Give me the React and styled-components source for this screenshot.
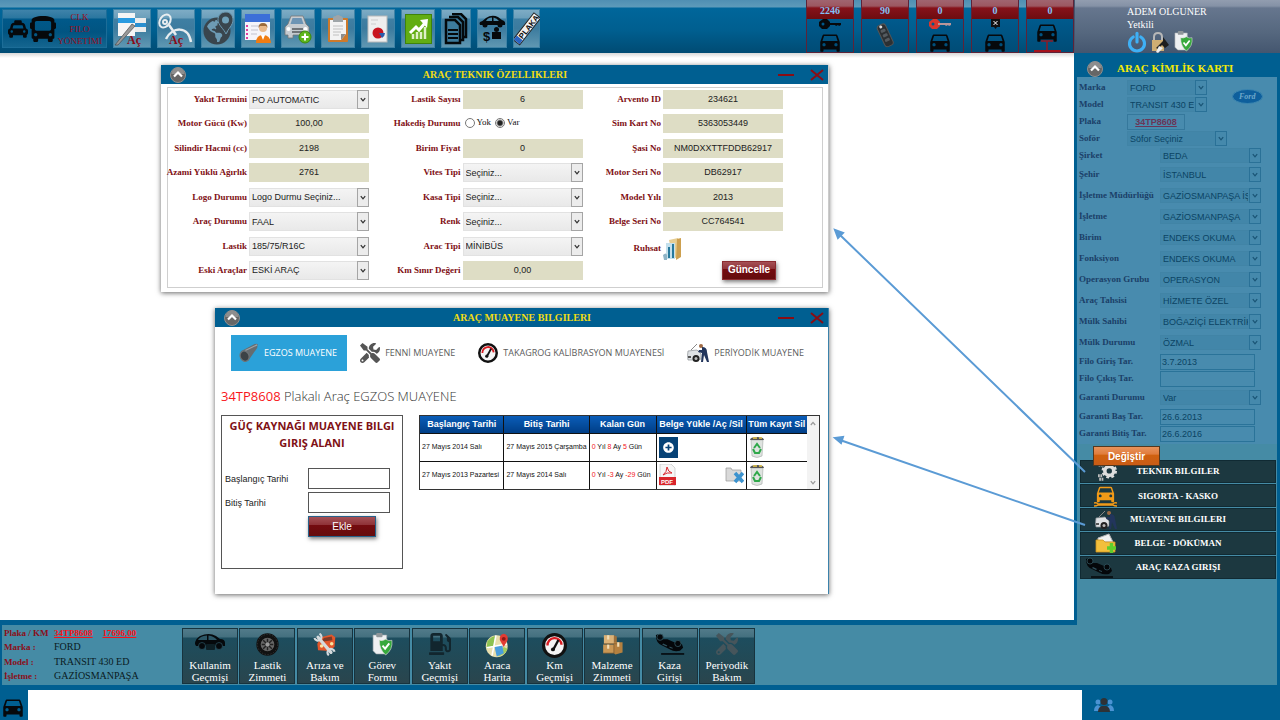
import React from "react";
import styled, { createGlobalStyle } from "styled-components";
import {
  FaTaxi, FaBus, FaTools, FaGasPump, FaGlobeAmericas, FaPlusCircle,
} from "react-icons/fa";
import { MdDirectionsCar } from "react-icons/md";

const serif = '"Liberation Serif", "Times New Roman", serif';
const sans = '"Liberation Sans", Arial, sans-serif';
const open = '"Open Sans", "Noto Sans", sans-serif';
const blue = "#005f91";
const teal = "#458ba5";

const Global = createGlobalStyle`
  *, *::before, *::after { box-sizing: border-box; }
  body { margin: 0; background: #fff; font-family: ${serif}; }
  button, input, select { margin: 0; border-radius: 0; }
  svg { display: block; flex: none; }
`;

/* ---------- page frame ---------- */
const Page = styled.div`
  display: flex;
  flex-direction: column;
  min-height: 100vh;
`;
const Header = styled.header`
  display: flex;
  height: 53px;
`;
const Toolbar = styled.div`
  flex: 1;
  display: flex;
  align-items: flex-start;
  justify-content: space-between;
  padding-left: 2px;
  background: linear-gradient(#4f8fb3 0, #5d9aba 7px, #00669b 8px, #005f90 30px, #004b73 100%);
`;
const ToolGroup = styled.div`
  display: flex;
  gap: 6px;
  padding-top: 9px;
`;
const ToolButton = styled.button`
  width: ${(p) => p.$w}px;
  height: 39px;
  padding: 0;
  display: flex;
  align-items: center;
  justify-content: center;
  gap: 2px;
  border: 1px solid ${(p) => (p.$dark ? "#1c6d98" : "#3f83a6")};
  background: ${(p) =>
    p.$dark
      ? "linear-gradient(#3f83aa 0, #2a769f 8px, #00598a 9px, #015481 60%, #14658f)"
      : "linear-gradient(#7eacc5 0, #6b9fbb 8px, #3f7fa3 9px, #3c7b9e 50%, #5f97b2)"};
`;
const Brand = styled.span`
  width: 44px;
  font: 9px/12px ${serif};
  text-align: center;
  color: #9c0d20;
`;
const Counters = styled.div`
  display: flex;
  gap: 7px;
`;
const Counter = styled.button`
  width: 48px;
  height: 53px;
  padding: 0;
  display: flex;
  flex-direction: column;
  border: 1px solid #5d2338;
  border-top: 0;
  background: linear-gradient(#00629a, #004c76);
`;
const CounterValue = styled.span`
  width: 100%;
  height: 19px;
  font: bold 10px/21px ${serif};
  color: #84c0f5;
  background: linear-gradient(#a06470 0, #9c5761 6px, #86121a 8px, #6d0c10 100%);
`;
const CounterArt = styled.span`
  flex: 1;
  width: 100%;
  display: flex;
  flex-direction: column;
  align-items: center;
  justify-content: ${(p) => (p.$center ? "center" : "flex-end")};
`;
const UserBox = styled.div`
  width: 206px;
  padding: 5px 0 0 52px;
  border-left: 1px solid #46566e;
  color: #fff;
  font: 10px/13px ${serif};
  background: linear-gradient(#929daf 0, #8592a6 6px, #66768e 8px, #56687f 60%, #44566f);
`;
const UserIcons = styled.div`
  display: flex;
  gap: 4px;
`;
const IconButton = styled.button`
  padding: 0;
  border: 0;
  background: none;
  display: flex;
`;

const Body = styled.div`
  flex: 1;
  display: flex;
  position: relative;
`;
const Left = styled.div`
  flex: 1;
  min-width: 0;
  display: flex;
  flex-direction: column;
`;
const Desktop = styled.main`
  flex: 1;
  display: flex;
  flex-direction: column;
  gap: 16px;
  padding: 12px 0 26px 161px;
  border-right: 3px solid ${blue};
  background: linear-gradient(#d8d8d8 0, #fff 5px);
`;
const Arrows = styled.svg`
  position: absolute;
  top: 0;
  left: 830px;
  pointer-events: none;
`;

/* ---------- windows ---------- */
const Window = styled.section`
  width: ${(p) => p.$w}px;
  margin-left: ${(p) => p.$indent || 0}px;
  background: #fff;
  border-right: 1px solid ${(p) => (p.$indent ? "#3b82ab" : "#ccc")};
  box-shadow: 0 1px 5px rgba(0, 0, 0, 0.6);
`;
const TitleBar = styled.div`
  display: grid;
  grid-template-columns: 42px 1fr 46px;
  align-items: center;
  height: 19px;
  padding: 0 4px 0 9px;
  background: ${blue};
`;
const Title = styled.h2`
  margin: 0;
  text-align: center;
  font: bold ${(p) => p.$size || 10}px/19px ${serif};
  color: ${(p) => (p.$size ? "#f2ea08" : "#f0dc14")};
`;
const WinControls = styled.div`
  display: flex;
  align-items: center;
  justify-content: space-between;
`;
const TechForm = styled.form`
  display: flex;
  justify-content: space-between;
  height: 201px;
  margin: 3px 5px 4px 6px;
  padding: 2px 39px 7px 0;
  border: 1px solid #cfcfcf;
`;
const FormColumn = styled.div`
  display: flex;
  flex-direction: column;
  justify-content: space-between;
`;
const FormRow = styled.div`
  display: grid;
  grid-template-columns: ${(p) => p.$label || 79}px 120px;
  align-items: center;
  gap: 2px;
  height: 19px;
`;
const FieldLabel = styled.label`
  display: flex;
  justify-content: flex-end;
  white-space: nowrap;
  font: bold 9px/19px ${serif};
  color: #800f14;
`;
const Value = styled.input`
  width: 100%;
  height: 19px;
  padding: 0;
  border: 0;
  text-align: center;
  font: 9px/19px ${sans};
  color: #222;
  background: #deddc5;
`;
const SelectWrap = styled.span`
  position: relative;
  display: block;
  width: ${(p) => (p.$w ? p.$w + "px" : "100%")};
`;
const SelectBox = styled.select`
  appearance: none;
  display: block;
  width: 100%;
  height: ${(p) => (p.$aside ? 15 : 19)}px;
  padding: 0 12px 0 2px;
  border: 1px solid ${(p) => (p.$aside ? "#4184a6" : "#e2e2e2")};
  font: 9px/12px ${sans};
  color: ${(p) => (p.$aside ? "#0b4464" : "#222")};
  background: ${(p) => (p.$aside ? "#4286a9" : "linear-gradient(#f4f4f4, #e9e9e9)")};
`;
const SelectArrow = styled.span`
  position: absolute;
  top: 0;
  right: 0;
  bottom: 0;
  width: 12px;
  display: flex;
  align-items: center;
  justify-content: center;
  pointer-events: none;
  color: ${(p) => (p.$aside ? "#1a5576" : "#333")};
  border: 1px solid ${(p) => (p.$aside ? "#2a7197" : "#a5a5a5")};
  background: ${(p) => (p.$aside ? "#4589ac" : "#ececec")};
`;
const RadioGroup = styled.div`
  display: flex;
  align-items: center;
  height: 19px;
  padding: 0 0 2px 2px;
`;
const RadioLabel = styled.label`
  display: flex;
  align-items: center;
  gap: 2px;
  margin-right: 4px;
  font: 9px/15px ${serif};
  color: #111;
`;
const Radio = styled.input`
  appearance: none;
  width: 10px;
  height: 10px;
  margin: 0;
  border: 1px solid #777;
  border-radius: 50%;
  background: #fff;
  &:checked { background: radial-gradient(#222 0 2px, #fff 4px); }
`;
const SubmitRow = styled.div`
  display: flex;
  justify-content: flex-end;
  padding-right: 7px;
`;
const RedButton = styled.button`
  width: ${(p) => p.$w}px;
  height: ${(p) => p.$h}px;
  padding: 0;
  border: 1px solid ${(p) => (p.$edge ? "#27628a" : "#8b2b30")};
  color: #fff;
  font: ${(p) => (p.$bold ? "bold" : "normal")} 10px/16px ${sans};
  background: linear-gradient(#a55055 0, #8f3338 40%, #740b0f 42%, #650c0d 100%);
  box-shadow: 1px 2px 4px rgba(0, 0, 0, 0.5);
`;

/* ---------- inspection window ---------- */
const Tabs = styled.nav`
  display: flex;
  gap: 5px;
  padding: 8px 0 0 16px;
`;
const Tab = styled.button`
  display: flex;
  align-items: center;
  gap: 5px;
  height: 36px;
  padding: 0 10px 0 8px;
  border: 0;
  white-space: nowrap;
  font: 9px/16px ${open};
  color: ${(p) => (p.$active ? "#fff" : "#5c5c5c")};
  background: ${(p) => (p.$active ? "#2ba1d9" : "transparent")};
`;
const Headline = styled.h3`
  margin: 14px 0 8px 6px;
  font: 300 13px/22px ${open};
  color: #333;
`;
const Plate = styled.span`
  font-weight: 400;
  color: #f8161b;
`;
const InspectionBody = styled.div`
  display: flex;
  align-items: flex-start;
  gap: 16px;
  padding: 0 8px 25px 6px;
`;
const EntryForm = styled.form`
  width: 182px;
  height: 154px;
  padding: 1px 3px;
  border: 1px solid #555;
`;
const EntryTitle = styled.h4`
  margin: 0 0 17px;
  text-align: center;
  font: bold 11px/17px ${open};
  color: #7f1116;
`;
const EntryRow = styled.div`
  display: grid;
  grid-template-columns: 83px 82px;
  align-items: center;
  margin-bottom: 3px;
`;
const EntryLabel = styled.label`
  font: 9px/16px ${sans};
  color: #222;
`;
const EntryInput = styled.input`
  height: 21px;
  border: 1px solid #555;
  background: #fff;
`;
const TableBox = styled.div`
  flex: 1;
  display: flex;
  border: 1px solid #333;
`;
const Records = styled.table`
  flex: 1;
  border-collapse: collapse;
  table-layout: fixed;
  font: 7px/12px ${sans};
  color: #111;
`;
const Th = styled.th`
  width: ${(p) => p.$w}px;
  height: 17px;
  padding: 0;
  white-space: nowrap;
  border-right: 1px solid #111;
  border-bottom: 1px solid #111;
  font: bold 9px/16px ${sans};
  color: #fff;
  background: linear-gradient(#0a5db8, #003e86);
  &:last-child { border-right: 0; }
`;
const Td = styled.td`
  height: 28px;
  padding: 0 2px;
  white-space: nowrap;
  border-right: 1px solid #111;
  border-bottom: 1px solid #111;
  &:last-child { border-right: 0; }
  tr:last-child & { border-bottom: 0; }
`;
const Red = styled.span`
  color: #f1161b;
`;
const CellIcons = styled.div`
  display: flex;
  justify-content: space-between;
`;
const ScrollStrip = styled.div`
  width: 12px;
  display: flex;
  flex-direction: column;
  align-items: center;
  justify-content: space-between;
  padding: 5px 0 4px;
  color: #999;
  background: #f3f3f3;
`;

/* ---------- identity card ---------- */
const Aside = styled.aside`
  width: 203px;
  border: solid ${blue};
  border-width: 0 3px 5px 0;
  background: ${teal};
`;
const AsideHead = styled.div`
  display: flex;
  align-items: center;
  gap: 14px;
  height: 24px;
  padding: 7px 0 0 10px;
  background: ${blue};
`;
const CardForm = styled.form`
  height: 367px;
  padding: 2px 0 0 2px;
  background: #488bae;
`;
const CardTop = styled.div`
  display: flex;
  align-items: center;
  gap: 25px;
`;
const CardRow = styled.div`
  display: grid;
  grid-template-columns: ${(p) => (p.$near ? 48 : 81)}px auto;
  justify-content: start;
  align-items: center;
  height: ${(p) => (p.$tall ? 21 : 17)}px;
`;
const CardLabel = styled.label`
  white-space: nowrap;
  font: bold 9px/15px ${serif};
  color: #1b3f68;
`;
const CardInput = styled.input`
  width: 95px;
  height: 16px;
  padding: 0 1px;
  border: 1px solid #2a7399;
  font: 9px/12px ${sans};
  color: #0b4464;
  background: #488bae;
`;
const PlateLink = styled.a`
  width: 58px;
  border: 1px solid #35789c;
  text-align: center;
  font: bold 9px/14px ${sans};
  color: #6b3557;
`;
const ChangeButton = styled.button`
  position: relative;
  display: block;
  width: 67px;
  height: 20px;
  margin: 2px 0 -6px 16px;
  padding: 0;
  border: 1px solid #54381f;
  color: #fff;
  font: bold 10px/20px ${sans};
  background: linear-gradient(#e8935c 0, #e07c3c 40%, #d0610f 45%, #c95c17 100%);
`;
const Menu = styled.nav`
  display: flex;
  flex-direction: column;
  gap: 1px;
  padding: 0 1px 0 3px;
`;
const MenuLink = styled.a`
  display: grid;
  grid-template-columns: 36px 1fr 36px;
  align-items: center;
  justify-items: center;
  height: 23px;
  border: 1px solid #102a33;
  font: bold 9px/21px ${serif};
  color: #fff;
  text-decoration: none;
  white-space: nowrap;
  background: #1c3840;
`;
const MenuIcon = styled.span`
  justify-self: end;
  margin-right: ${(p) => (p.$wide ? 4 : 0)}px;
`;

/* ---------- bottom bar ---------- */
const BottomBar = styled.div`
  display: flex;
  height: 70px;
  padding-left: 2px;
  border: solid ${blue};
  border-width: 5px 0;
  background: ${blue};
`;
const BottomInner = styled.div`
  flex: 1;
  display: flex;
  padding: 0 0 2px 2px;
  background: ${teal};
`;
const Info = styled.dl`
  width: 178px;
  margin: 0;
  padding-top: 1px;
  display: grid;
  grid-template-columns: 50px 1fr;
  grid-template-rows: repeat(4, 1fr);
  align-items: center;
  font: 10px/14px ${serif};
`;
const InfoLabel = styled.dt`
  font: bold 9px/14px ${serif};
  white-space: nowrap;
  color: #8a0f19;
`;
const InfoValue = styled.dd`
  margin: 0;
  display: flex;
  gap: 10px;
  color: #0a1a22;
`;
const RedLink = styled.a`
  font: bold 9px/14px ${serif};
  color: #fa1016;
`;
const Actions = styled.div`
  width: 573px;
  padding-top: 3px;
  display: flex;
  justify-content: space-between;
`;
const ActionButton = styled.button`
  width: 56px;
  height: 56px;
  padding: 4px 0 0;
  display: flex;
  flex-direction: column;
  align-items: center;
  justify-content: space-between;
  border: 1px solid #17333e;
  color: #fff;
  font: 11px/12px ${serif};
  background: linear-gradient(#527b8a 0, #44707f 8px, #1d4d5e 9px, #234955 60%, #2a454d 100%);
`;
const Footer = styled.footer`
  display: flex;
  height: 30px;
  background: ${blue};
`;
const FootCell = styled.div`
  width: ${(p) => p.$w}px;
  display: flex;
  align-items: center;
  padding: ${(p) => p.$pad};
`;
const FootInput = styled.div`
  flex: 1;
  background: #fff;
`;

/* ---------- drawings ---------- */
const Svg = ({ w, h = w, vb = "0 0 32 32", children }) => (
  <svg width={w} height={h} viewBox={vb} aria-hidden="true">{children}</svg>
);
const Chevron = ({ up }) => (
  <svg width="6" height="5" viewBox="0 0 6 5" aria-hidden="true">
    <path d={up ? "M.8 4 3 1.4 5.200 4" : "M.8 1.200 3 3.800 5.200 1.200"} fill="none" stroke="currentColor" strokeWidth="1.300" />
  </svg>
);
const Collapse = () => (
  <Svg w={16}>
    <circle cx="16" cy="16" r="15" fill="#666" stroke="#8f8f8f" strokeWidth="2" />
    <path d="M3 14a13 13 0 0 1 26 0z" fill="#8e8e8e" />
    <path d="M8 19 16 11l8 8" fill="none" stroke="#fff" strokeWidth="4.500" />
  </Svg>
);
const Sheets = () => (
  <Svg w={36} vb="0 0 36 36">
    <rect x="4" y="2" width="17" height="23" fill="#f5f5f5" />
    <rect x="4" y="7" width="17" height="5" fill="#2a9be0" />
    <rect x="21" y="7" width="11" height="14" fill="#ececec" />
    <rect x="21" y="12" width="11" height="4" fill="#2a8fd0" />
    <path d="M1 34 18 13l3 2L4 34z" fill="#999" stroke="#4c4c4c" strokeWidth=".7" />
    <text x="13" y="33" fontFamily="Liberation Serif" fontWeight="bold" fontSize="12" fill="#8c0a14">Aç</text>
  </Svg>
);
const Satellite = () => (
  <Svg w={36} vb="0 0 36 36">
    <g fill="none" stroke="#e7edf0" strokeWidth="2">
      <ellipse cx="7" cy="10" rx="5" ry="7" transform="rotate(35 7 10)" />
      <circle cx="7" cy="11" r="2" />
      <path d="M11 14 18 24M8 28C14 16 30 14 33 31" strokeWidth="2.500" />
    </g>
    <text x="11" y="33" fontFamily="Liberation Serif" fontWeight="bold" fontSize="12" fill="#8c0a14">Aç</text>
  </Svg>
);
const GlobePin = () => (
  <Svg w={32} h={36} vb="0 0 32 36">
    <circle cx="15" cy="20" r="13" fill="#6d9bb4" />
    <g transform="translate(1 6)" color="#39454d"><FaGlobeAmericas size="28" /></g>
    <path d="M24 1c-5 0-8 3.500-8 8 0 5 6 9 8 14 2-5 7-9 7-14 0-4.500-3-8-7-8z" fill="#39454d" stroke="#6c9ab2" />
    <circle cx="23.500" cy="9" r="3.500" fill="#6fa0b9" />
  </Svg>
);
const Contact = () => (
  <Svg w={27} h={30} vb="0 0 27 30">
    <rect width="25" height="26" fill="#f4f4fa" />
    <rect width="25" height="8" fill="#3c6fd8" />
    <path d="M2 11v14" stroke="#e03fa0" strokeWidth="2" strokeDasharray="2 2" />
    <path d="M6 12h9M6 16h7M6 20h6" stroke="#c2c2ce" />
    <circle cx="18" cy="14" r="4" fill="#e8b88a" />
    <path d="M13.500 14q0-5 4.500-5t4.500 5l-1.500-2h-6z" fill="#9b6a3b" />
    <path d="M11 29q0-8 7-8t8 8z" fill="#f07c12" />
    <path d="m16 21 2 5 2-5z" fill="#fff" />
  </Svg>
);
const CarPlus = () => (
  <Svg w={28} h={30} vb="0 0 28 30">
    <path d="M4 10 7 2h12l3 8 3 3v8h-4v3h-4v-3H9v3H4v-3H1v-8z" fill="#c6cbd0" stroke="#777" strokeWidth=".8" />
    <path d="m6.500 10 2-6h9l2 6z" fill="#6d94b4" />
    <path d="M8 14h11v2H8zM8 17h11v2H8z" fill="#707478" />
    <circle cx="4.500" cy="15" r="2" fill="#fff" /><circle cx="21.500" cy="15" r="2" fill="#fff" />
    <circle cx="21" cy="23" r="6" fill="#5db51b" stroke="#3c8a0c" />
    <path d="M21 19.500v7M17.500 23h7" stroke="#fff" strokeWidth="2" />
  </Svg>
);
const Clipboard = () => (
  <Svg w={22} h={28} vb="0 0 22 28">
    <rect x="1" y="3" width="20" height="24" rx="1" fill="#cd7a2c" />
    <path d="M3 5h16v14l-5 6H3z" fill="#f3f3f3" />
    <path d="M14 25v-6h5z" fill="#8d8d8d" />
    <path d="M6 3q0-2 3-2 0-1 2-1t2 1q3 0 3 3v3H6z" fill="#9fa5a8" />
    <path d="M6 11h10M6 14h10M6 17h8M6 20h6" stroke="#c0c0c0" />
  </Svg>
);
const Report = () => (
  <Svg w={22} h={28} vb="0 0 22 28">
    <rect x="1" y="1" width="19" height="26" fill="#eee" stroke="#b9b9b9" />
    <path d="M4 5h7M4 9h5" stroke="#ccc" />
    <circle cx="11" cy="18" r="5.500" fill="#c8141f" />
    <path d="M12 18h6a6 6 0 0 1-3 5z" fill="#2b5cab" />
  </Svg>
);
const Growth = () => (
  <Svg w={27} h={30} vb="0 0 27 30">
    <rect x=".5" y=".5" width="26" height="29" fill="#62ad12" stroke="#3f830a" />
    <path d="M8 20v5M12 18v7M16 18v7M20 13v12" stroke="#dff0c8" strokeWidth="2.500" />
    <path d="m5 19 6-6 3 3 6-7" fill="none" stroke="#fff" strokeWidth="3" />
    <path d="m15 6 8-1-1 9z" fill="#fff" />
  </Svg>
);
const Files = () => (
  <Svg w={24} h={32} vb="0 0 24 32">
    <path d="M8 1h9l5 5v18h-4" fill="#3d7b9c" stroke="#05090b" strokeWidth="2.500" />
    <path d="M5 4h9l5 5v18h-3" fill="#3d7b9c" stroke="#05090b" strokeWidth="2.500" />
    <path d="M2 7h9l5 5v18H2z" fill="#3d7b9c" stroke="#05090b" strokeWidth="2.500" />
    <path d="M4 17h10M4 21h10M4 25h10" stroke="#05090b" strokeWidth="2" />
  </Svg>
);
const CarMoney = () => (
  <Svg w={27} h={30} vb="0 0 27 30">
    <path d="M1 8q3-1 6-4 6-4 12-1l4 3q4 1 3 5H1q-1-2 0-3z" fill="#06090c" />
    <path d="M9 4.500Q8 5 7 7h6V3.500q-2 0-4 1zM14.500 3.500V7H20q-2-3-5.500-3.500z" fill="#4986a6" />
    <circle cx="6" cy="11" r="2.500" fill="#06090c" /><circle cx="21" cy="11" r="2.500" fill="#06090c" />
    <text x="4" y="27" fontFamily="Liberation Sans" fontWeight="bold" fontSize="13" fill="#06090c">$</text>
    <path d="M13 18h9v7h-9z" fill="#06090c" /><circle cx="17.500" cy="15.500" r="2.500" fill="#06090c" />
  </Svg>
);
const PlateTag = () => (
  <Svg w={26} h={34} vb="0 0 26 34">
    <g transform="rotate(-52 13 17)">
      <rect x="-4" y="12.500" width="34" height="8.500" fill="#f2f2f2" stroke="#222" />
      <rect x="-3.500" y="13" width="5" height="7.500" fill="#2c64c0" />
      <text x="2" y="20" fontFamily="Liberation Sans" fontWeight="bold" fontSize="8" fill="#111">PLAKA</text>
    </g>
  </Svg>
);
const Remote = () => (
  <Svg w={20} h={26} vb="0 0 20 26">
    <g transform="rotate(-25 10 13)">
      <rect x="6" y="1" width="9" height="23" rx="3" fill="#2c3033" stroke="#555" />
      <rect x="8" y="6" width="5" height="3" rx="1" fill="#555b60" />
      <rect x="8" y="11" width="5" height="3" rx="1" fill="#555b60" />
      <rect x="8" y="16" width="5" height="3" rx="1" fill="#555b60" />
      <circle cx="10" cy="3" r="1.500" fill="#ddd" />
    </g>
  </Svg>
);
const KeyShape = ({ color, blade }) => (
  <Svg w={24} h={10} vb="0 0 24 10">
    <path d="M5 0h4l3 3v4L9 10H4L1 7V3z" fill={color} />
    <path d="M10 4h13v2l-2 1-1-1-2 1-1-1h-7z" fill={blade || color} />
    <circle cx="5" cy="5" r="1.500" fill="#00588a" />
  </Svg>
);
const Badge = () => (
  <Svg w={9} h={10} vb="0 0 9 10">
    <path d="M0 0h9v8H6L4.500 10 3 8H0z" fill="#111" />
    <path d="m2.500 2 4 4M6.500 2l-4 4" stroke="#fff" />
  </Svg>
);
const LiftedCar = () => (
  <Svg w={46} h={33} vb="0 0 46 33">
    <g transform="translate(7 0)" color="#06090c"><MdDirectionsCar size="26" /></g>
    <path d="M14 22h12M20 22v10" stroke="#8f1a24" strokeWidth="1.500" />
    <path d="M7 32h27" stroke="#a5121c" strokeWidth="2" />
  </Svg>
);
const Power = () => (
  <Svg w={20} h={22}>
    <path d="M10 8a12 12 0 1 0 12 0M16 2v14" fill="none" stroke="#3fb0f5" strokeWidth="5" strokeLinecap="round" />
  </Svg>
);
const LockPen = () => (
  <Svg w={19} h={22} vb="0 0 19 22">
    <path d="M3 11V6q0-4 4-4t4 4v5" fill="none" stroke="#b7b7b7" strokeWidth="2" />
    <rect x="1" y="9" width="12" height="11" fill="#cfae73" />
    <path d="m12 6 6 8-4 3-3-3-4 4-2-1 7-7z" fill="#1e1e1e" />
    <path d="m8 15 4 2-5 5-2-1z" fill="#eee" />
  </Svg>
);
const TaskShield = ({ w = 20 }) => (
  <Svg w={w} h={Math.round(w * 1.1)} vb="0 0 20 22">
    <path d="M1 2h13v18H4l-3-3z" fill="#eef0f2" stroke="#a5abb0" strokeWidth=".6" />
    <rect x="4" y="0" width="6" height="4" rx="1" fill="#8f969a" />
    <path d="M13 6q3 2 6 1 1 9-6 14-6-5-6-14 3 1 6-1z" fill="#36a93c" stroke="#ddd" strokeWidth=".6" />
    <path d="m10 12 2.500 3 4-5" fill="none" stroke="#fff" strokeWidth="1.800" />
  </Svg>
);
const FordLogo = () => (
  <Svg w={31} h={15} vb="0 0 31 15">
    <ellipse cx="15.500" cy="7.500" rx="15" ry="7" fill="#0e5f9c" stroke="#3c86b0" />
    <text x="7" y="10" fontFamily="Liberation Serif" fontStyle="italic" fontWeight="bold" fontSize="8" fill="#6fa9cb">Ford</text>
  </Svg>
);
const Gear = () => (
  <Svg w={19}>
    <circle cx="19" cy="15" r="7.500" fill="none" stroke="#dedede" strokeWidth="6" />
    <circle cx="19" cy="15" r="11" fill="none" stroke="#dedede" strokeWidth="4" strokeDasharray="4.600 4.040" />
    <path d="M1 5h9M0 23h8M2 29h8" stroke="#bdbdbd" strokeWidth="5" strokeDasharray="3 1" />
  </Svg>
);
const Insurance = () => (
  <Svg w={23} h={22} vb="0 0 23 22">
    <g transform="translate(0 -3)" color="#f29a17"><MdDirectionsCar size="23" /></g>
    <path d="M0 18q3-1 4 1h15q1-2 4-1M0 21q3 0 4-1h15q1 1 4 1" fill="none" stroke="#f29a17" strokeWidth="1.500" />
  </Svg>
);
const Mechanic = () => (
  <Svg w={22} h={20} vb="0 0 22 20">
    <path d="M1 8 10 7l4 4v5l-3 1H1q-1-4 0-9z" fill="#dfe2e5" stroke="#8b8f93" strokeWidth=".7" />
    <path d="m4 7 6-6" stroke="#888" />
    <path d="M1 13h3v2H1z" fill="#555" />
    <circle cx="9" cy="15.500" r="3.500" fill="#222" /><circle cx="9" cy="15.500" r="1.500" fill="#bbb" />
    <circle cx="14" cy="3" r="2" fill="#a06a44" />
    <path d="M15 4q5 0 5 5l2 10h-2l-3-7-1 7h-2l1-9-4-1 1-2 3 0z" fill="#22355c" />
  </Svg>
);
const FolderPlus = () => (
  <Svg w={22} h={21} vb="0 0 22 21">
    <path d="M3 5 14 1l4 8H3z" fill="#f2f2f2" stroke="#b5b5b5" />
    <path d="M1 7h7l2 2h10v10H1z" fill="#f2bf3c" stroke="#cf9520" strokeWidth=".8" />
    <path d="M16.500 10v10M12 15h9" stroke="#5fcd2c" strokeWidth="3.500" />
  </Svg>
);
const Flipped = ({ w = 28, h = 21 }) => (
  <Svg w={w} h={h} vb="0 0 28 21">
    <path d="M1 2q3-2 6 4l5 0 7 3q5-1 7 2l1 3-3 3q-6 1-9-1L7 12Q1 10 1 2z" fill="#04070a" />
    <circle cx="5" cy="4" r="3" fill="#04070a" stroke="#31545e" strokeWidth=".8" />
    <circle cx="22" cy="10" r="3" fill="#04070a" stroke="#31545e" strokeWidth=".8" />
    <path d="m8 10 4 2-1 1-4-2zM14 13l3 1v1l-3-1z" fill="#2f515c" />
    <path d="M6 20h22" stroke="#04070a" strokeWidth="1.500" />
  </Svg>
);
const SideCar = () => (
  <Svg w={32} h={18} vb="0 0 32 18">
    <path d="M1 11q0-5 5-8 9-4 16 0l4 3q5 0 5 4v3H2z" fill="#05090c" />
    <path d="M7 4q-3 2-3 3h9V2.500q-4 0-6 1.500zM14.500 2.500V7H23q-3-4-8.500-4.500z" fill="#2c5665" />
    <circle cx="8" cy="13" r="3.500" fill="#05090c" stroke="#2c5665" strokeWidth=".7" />
    <circle cx="25" cy="13" r="3.500" fill="#05090c" stroke="#2c5665" strokeWidth=".7" />
    <rect x="12" y="11" width="9" height="6" rx="1" fill="#0d2026" />
  </Svg>
);
const Exhaust = () => (
  <Svg w={20}>
    <path d="M3 13 22 3q6-3 8-1l-1 6L15 28z" fill="#666c70" />
    <path d="M10 12 29 3" stroke="#9da2a6" strokeWidth="2" />
    <ellipse cx="9" cy="21" rx="7" ry="8.500" fill="#3c4246" stroke="#6d7377" strokeWidth="2" transform="rotate(-25 9 21)" />
  </Svg>
);
const Gauge = ({ w = 20 }) => (
  <Svg w={w}>
    <circle cx="16" cy="16" r="14" fill="#f5f5f5" stroke="#111" strokeWidth="4" />
    <path d="M7 16a9 9 0 0 1 18-1" fill="none" stroke="#d81b21" strokeWidth="3" />
    <path d="M14 22 21 9" stroke="#111" strokeWidth="3" />
    <circle cx="14" cy="21" r="2.500" fill="#111" />
  </Svg>
);
const Wheel = () => (
  <Svg w={23}>
    <circle cx="16" cy="16" r="12.500" fill="#666" stroke="#111" strokeWidth="6" />
    <circle cx="16" cy="16" r="14" fill="none" stroke="#3c3c3c" strokeDasharray="2 2" />
    <path d="M16 8v16M8 16h16M10 10l12 12M22 10 10 22" stroke="#222" strokeWidth="2" />
    <circle cx="16" cy="16" r="3" fill="#999" />
  </Svg>
);
const Repair = () => (
  <Svg w={23}>
    <path d="M6 15 11 6l15-4 5 4-1 13-7 6-16-1z" fill="#e2572b" />
    <path d="m12 12 3-5 11-2 1 5z" fill="#7c3a28" />
    <circle cx="12" cy="18" r="2.500" fill="#fbe3a0" /><circle cx="26" cy="15" r="2.500" fill="#fbe3a0" />
    <path d="M7 6 25 27" stroke="#d5dadd" strokeWidth="4.500" strokeLinecap="round" />
    <path d="M2 7a5 5 0 1 0 7-6M22 31a5 5 0 1 1 8-5" fill="none" stroke="#d5dadd" strokeWidth="3" />
  </Svg>
);
const MapPin = () => (
  <Svg w={25}>
    <circle cx="15" cy="17" r="14" fill="#e9dfae" />
    <path d="M3 11q5-7 10-7l-2 12-9 4z" fill="#8cc152" /><path d="M16 30l8-12 5 2q-3 8-13 10z" fill="#a3cc5b" />
    <path d="m12 17 10-2 2 11-9 4z" fill="#4a9ddd" />
    <path d="M14 3 9 29M2 19l26-5" stroke="#fff" strokeWidth="2" />
    <path d="M24 1q-6 1-5 8l5 9 5-9q1-7-5-8z" fill="#e23b33" /><circle cx="24" cy="7.500" r="2.500" fill="#8c1a17" />
  </Svg>
);
const Boxes = () => (
  <Svg w={23}>
    <path d="M4 3h14v12H4z" fill="#dcb277" /><path d="M18 3l4 2v12l-4-2z" fill="#9b6f3c" />
    <path d="M3 16h15v12H3z" fill="#c99755" /><path d="M18 13h12v14l-10 3-2-2z" fill="#b5803f" />
    <path d="M10 3v6M10 16v6M24 13v6" stroke="#f3ddb4" strokeWidth="3" />
    <path d="M4 15h18M3 28h15M18 16v12" stroke="#80592c" />
  </Svg>
);
const Ruhsat = () => (
  <Svg w={19} h={24} vb="0 0 19 24">
    <path d="M6 3 15 1l2 18-7 3z" fill="#e6cd92" /><path d="m14 2 4-1v19l-5 3z" fill="#cda04f" />
    <path d="M3 6h9v16H3z" fill="#c4e0ec" /><path d="M5 10h2v11H5zM9 7h2v14H9z" fill="#27799c" />
    <path d="M0 18q3-3 4 0v5H1z" fill="#8fb4c7" />
  </Svg>
);
const Bin = () => (
  <Svg w={16} h={22} vb="0 0 16 22">
    <path d="m2 4 1 16q5 3 10 0l1-16z" fill="#dfe3e0" stroke="#a5aaa7" strokeWidth=".6" />
    <path d="M1 4q0-3 7-3t7 3z" fill="#555" /><path d="M4 2h4M10 2h3" stroke="#e8c84a" strokeWidth="1.500" />
    <path d="m5 12 3-4 3 4M12 13l-2 4H6l-2-4" fill="none" stroke="#2fa84a" strokeWidth="2" />
  </Svg>
);
const Pdf = () => (
  <Svg w={17} h={22} vb="0 0 17 22">
    <path d="M1 0h11l4 4v18H1z" fill="#f6f6f6" stroke="#bbb" strokeWidth=".6" />
    <rect y="13" width="17" height="8" fill="#d9252b" />
    <text x="2" y="20" fontFamily="Liberation Sans" fontWeight="bold" fontSize="6" fill="#fff">PDF</text>
    <path d="M4 11q4-3 4-8 1 5 5 6-5-1-9 2z" fill="none" stroke="#d9252b" />
  </Svg>
);
const FolderX = () => (
  <Svg w={19} h={20} vb="0 0 19 20">
    <path d="M1 4h5l1 2h9v11H1z" fill="#d9d9d9" stroke="#999" strokeWidth=".7" />
    <path d="m10 9 8 9M18 9l-8 9" stroke="#3c93cf" strokeWidth="3.500" />
  </Svg>
);
const AddDoc = () => (
  <Svg w={19} h={21} vb="0 0 19 21">
    <rect width="19" height="21" fill="#064276" />
    <g transform="translate(4 5)" color="#fff"><FaPlusCircle size="11" /></g>
  </Svg>
);
const People = () => (
  <Svg w={20} h={16} vb="0 0 20 16">
    <g fill="#4b93d3">
      <circle cx="4" cy="5" r="2.500" /><path d="M0 14q0-5 4-6l3 2-2 4z" />
      <circle cx="16" cy="5" r="2.500" /><path d="M20 14q0-5-4-6l-3 2 2 4z" />
    </g>
    <circle cx="10" cy="4.500" r="3.500" fill="#2e3236" />
    <path d="M4 15q0-5 4-6h4q4 1 4 6z" fill="#2e3236" />
  </Svg>
);
const BlackCar = () => <MdDirectionsCar size={26} color="#06090c" />;

/* ---------- parts ---------- */
const Select = ({ id, value, w, aside }) => (
  <SelectWrap $w={w}>
    <SelectBox id={id} $aside={aside} defaultValue={value}>
      <option>{value}</option>
    </SelectBox>
    <SelectArrow $aside={aside}><Chevron /></SelectArrow>
  </SelectWrap>
);

const TechRow = ({ id, label, value, select, labelWidth }) => (
  <FormRow $label={labelWidth}>
    <FieldLabel htmlFor={id}>{label}</FieldLabel>
    {select ? <Select id={id} value={value} /> : <Value id={id} defaultValue={value} />}
  </FormRow>
);

const WindowTitle = ({ children }) => (
  <TitleBar>
    <IconButton type="button" aria-label="Daralt"><Collapse /></IconButton>
    <Title>{children}</Title>
    <WinControls>
      <IconButton type="button" aria-label="Küçült">
        <Svg w={16} h={14} vb="0 0 16 14"><path d="M0 7h16" stroke="#8a0d14" strokeWidth="2" /></Svg>
      </IconButton>
      <IconButton type="button" aria-label="Kapat">
        <Svg w={14} vb="0 0 14 14"><path d="m1 2 12 10M13 2 1 12" stroke="#8a0d14" strokeWidth="2" /></Svg>
      </IconButton>
    </WinControls>
  </TitleBar>
);

const tools = [
  ["Evrak", 38, <Sheets />], ["Uydu", 38, <Satellite />], ["Harita", 34, <GlobePin />],
  ["Personel", 34, <Contact />], ["Araç Ekle", 34, <CarPlus />], ["Pano", 34, <Clipboard />],
  ["Rapor", 34, <Report />], ["Grafik", 34, <Growth />], ["Dosyalar", 30, <Files />],
  ["Gider", 30, <CarMoney />], ["Plaka", 27, <PlateTag />],
];

const colOne = [
  ["Yakıt Termini", "PO AUTOMATIC", 1], ["Motor Gücü (Kw)", "100,00"], ["Silindir Hacmi (cc)", "2198"],
  ["Azami Yüklü Ağırlık", "2761"], ["Logo Durumu", "Logo Durmu Seçiniz...", 1], ["Araç Durumu", "FAAL", 1],
  ["Lastik", "185/75/R16C", 1], ["Eski Araçlar", "ESKİ ARAÇ", 1],
];
const colTwo = [
  ["Birim Fiyat", "0"], ["Vites Tipi", "Seçiniz...", 1], ["Kasa Tipi", "Seçiniz...", 1],
  ["Renk", "Seçiniz...", 1], ["Arac Tipi", "MİNİBÜS", 1], ["Km Sınır Değeri", "0,00"],
];
const colThree = [
  ["Arvento ID", "234621"], ["Sim Kart No", "5363053449"], ["Şasi No", "NM0DXXTTFDDB62917"],
  ["Motor Seri No", "DB62917"], ["Model Yılı", "2013"], ["Belge Seri No", "CC764541"],
];
const cardRows = [
  ["Şirket", "BEDA", "select", 0], ["Şehir", "İSTANBUL", "select", 1],
  ["İşletme Müdürlüğü", "GAZİOSMANPAŞA İŞLETME", "select", 1], ["İşletme", "GAZİOSMANPAŞA", "select", 1],
  ["Birim", "ENDEKS OKUMA", "select", 1], ["Fonksiyon", "ENDEKS OKUMA", "select", 1],
  ["Operasyon Grubu", "OPERASYON", "select", 1], ["Araç Tahsisi", "HİZMETE ÖZEL", "select", 1],
  ["Mülk Sahibi", "BOĞAZİÇİ ELEKTRİK", "select", 1], ["Mülk Durumu", "ÖZMAL", "select", 1],
  ["Filo Giriş Tar.", "3.7.2013", "input", 0], ["Filo Çıkış Tar.", "", "input", 0],
  ["Garanti Durumu", "Var", "select", 1], ["Garanti Baş Tar.", "26.6.2013", "input", 0],
  ["Garanti Bitiş Tar.", "26.6.2016", "input", 0],
];
const menu = [
  ["TEKNIK BILGILER", <Gear />], ["SIGORTA - KASKO", <Insurance />], ["MUAYENE BILGILERI", <Mechanic />],
  ["BELGE - DÖKÜMAN", <FolderPlus />], ["ARAÇ KAZA GIRIŞI", <Flipped />, true],
];
const actions = [
  ["Kullanim", "Geçmişi", <SideCar />],
  ["Lastik", "Zimmeti", <Wheel />],
  ["Arıza ve", "Bakım", <Repair />],
  ["Görev", "Formu", <TaskShield w={21} />],
  ["Yakıt", "Geçmişi", <FaGasPump size={22} color="#12262e" />],
  ["Araca", "Harita", <MapPin />],
  ["Km", "Geçmişi", <Gauge w={25} />],
  ["Malzeme", "Zimmeti", <Boxes />],
  ["Kaza", "Girişi", <Flipped w={31} h={22} />],
  ["Periyodik", "Bakım", <FaTools size={22} color="#46555b" />],
];

const TechWindow = () => (
  <Window $w={668}>
    <WindowTitle>ARAÇ TEKNIK ÖZELLIKLERI</WindowTitle>
    <TechForm onSubmit={(e) => e.preventDefault()}>
      <FormColumn>
        {colOne.map(([l, v, s], i) => <TechRow key={l} id={"a" + i} label={l} value={v} select={s} />)}
      </FormColumn>
      <FormColumn>
        <TechRow id="tires" label="Lastik Sayısı" value="6" />
        <FormRow role="radiogroup" aria-labelledby="hak">
          <FieldLabel as="span" id="hak">Hakediş Durumu</FieldLabel>
          <RadioGroup>
            <RadioLabel><Radio type="radio" name="hak" />Yok</RadioLabel>
            <RadioLabel><Radio type="radio" name="hak" defaultChecked />Var</RadioLabel>
          </RadioGroup>
        </FormRow>
        {colTwo.map(([l, v, s], i) => <TechRow key={l} id={"b" + i} label={l} value={v} select={s} />)}
      </FormColumn>
      <FormColumn>
        {colThree.map(([l, v], i) => <TechRow key={l} id={"c" + i} label={l} value={v} labelWidth={66} />)}
        <FormRow $label={66}>
          <FieldLabel as="span">Ruhsat</FieldLabel>
          <IconButton type="button" aria-label="Ruhsat"><Ruhsat /></IconButton>
        </FormRow>
        <SubmitRow><RedButton $w={54} $h={19} $bold>Güncelle</RedButton></SubmitRow>
      </FormColumn>
    </TechForm>
  </Window>
);

const InspectionWindow = () => (
  <Window $w={614} $indent={54}>
    <WindowTitle>ARAÇ MUAYENE BILGILERI</WindowTitle>
    <Tabs>
      <Tab $active><Exhaust />EGZOS MUAYENE</Tab>
      <Tab><FaTools size={20} color="#555" />FENNİ MUAYENE</Tab>
      <Tab><Gauge />TAKAGROG KALİBRASYON MUAYENESİ</Tab>
      <Tab><Mechanic />PERİYODİK MUAYENE</Tab>
    </Tabs>
    <Headline><Plate>34TP8608</Plate> Plakalı Araç EGZOS MUAYENE</Headline>
    <InspectionBody>
      <EntryForm onSubmit={(e) => e.preventDefault()}>
        <EntryTitle>GÜÇ KAYNAĞI MUAYENE BILGI GIRIŞ ALANI</EntryTitle>
        <EntryRow><EntryLabel htmlFor="start">Başlangıç Tarihi</EntryLabel><EntryInput id="start" /></EntryRow>
        <EntryRow><EntryLabel htmlFor="end">Bitiş Tarihi</EntryLabel><EntryInput id="end" /></EntryRow>
        <EntryRow><span /><RedButton $w={68} $h={21} $edge>Ekle</RedButton></EntryRow>
      </EntryForm>
      <TableBox>
        <Records>
          <thead>
            <tr>
              <Th $w={84}>Başlangıç Tarihi</Th><Th $w={85}>Bitiş Tarihi</Th><Th $w={67}>Kalan Gün</Th>
              <Th $w={90}>Belge Yükle /Aç /Sil</Th><Th $w={61}>Tüm Kayıt Sil</Th>
            </tr>
          </thead>
          <tbody>
            <tr>
              <Td>27 Mayıs 2014 Salı</Td><Td>27 Mayıs 2015 Çarşamba</Td>
              <Td><Red>0</Red> Yıl <Red>8</Red> Ay <Red>5</Red> Gün</Td>
              <Td><IconButton aria-label="Belge yükle"><AddDoc /></IconButton></Td>
              <Td><IconButton aria-label="Kaydı sil"><Bin /></IconButton></Td>
            </tr>
            <tr>
              <Td>27 Mayıs 2013 Pazartesi</Td><Td>27 Mayıs 2014 Salı</Td>
              <Td><Red>0</Red> Yıl <Red>-3</Red> Ay <Red>-29</Red> Gün</Td>
              <Td>
                <CellIcons>
                  <IconButton aria-label="Belge aç"><Pdf /></IconButton>
                  <IconButton aria-label="Belge sil"><FolderX /></IconButton>
                </CellIcons>
              </Td>
              <Td><IconButton aria-label="Kaydı sil"><Bin /></IconButton></Td>
            </tr>
          </tbody>
        </Records>
        <ScrollStrip><Chevron up /><Chevron /></ScrollStrip>
      </TableBox>
    </InspectionBody>
  </Window>
);

const IdentityCard = () => (
  <Aside>
    <AsideHead>
      <IconButton type="button" aria-label="Daralt"><Collapse /></IconButton>
      <Title $size={11}>ARAÇ KİMLİK KARTI</Title>
    </AsideHead>
    <CardForm onSubmit={(e) => e.preventDefault()}>
      <CardTop>
        <div>
          <CardRow $near><CardLabel htmlFor="brand">Marka</CardLabel><Select id="brand" value="FORD" w={80} aside /></CardRow>
          <CardRow $near><CardLabel htmlFor="model">Model</CardLabel><Select id="model" value="TRANSIT 430 ED" w={80} aside /></CardRow>
        </div>
        <FordLogo />
      </CardTop>
      <CardRow $near><CardLabel as="span">Plaka</CardLabel><PlateLink href="#plaka">34TP8608</PlateLink></CardRow>
      <CardRow $near><CardLabel htmlFor="driver">Soför</CardLabel><Select id="driver" value="Söfor Seçiniz" w={100} aside /></CardRow>
      {cardRows.map(([l, v, type, tall], i) => (
        <CardRow key={l} $tall={tall}>
          <CardLabel htmlFor={"k" + i}>{l}</CardLabel>
          {type === "select" ? <Select id={"k" + i} value={v} w={101} aside /> : <CardInput id={"k" + i} defaultValue={v} />}
        </CardRow>
      ))}
    </CardForm>
    <ChangeButton type="button">Değiştir</ChangeButton>
    <Menu>
      {menu.map(([l, icon, wide]) => (
        <MenuLink key={l} href="#menu"><MenuIcon $wide={wide}>{icon}</MenuIcon>{l}</MenuLink>
      ))}
    </Menu>
  </Aside>
);

export default function App() {
  return (
    <Page>
      <Global />
      <Header>
        <Toolbar>
          <ToolGroup>
            <ToolButton $w={105} $dark>
              <FaTaxi size={20} color="#06090c" />
              <FaBus size={26} color="#06090c" />
              <Brand>CLK<br />FILO<br />YÖNETİMİ</Brand>
            </ToolButton>
            {tools.map(([name, w, icon]) => <ToolButton key={name} $w={w} aria-label={name}>{icon}</ToolButton>)}
          </ToolGroup>
          <Counters>
            <Counter><CounterValue>2246</CounterValue><CounterArt><KeyShape color="#06090c" /><BlackCar /></CounterArt></Counter>
            <Counter><CounterValue>90</CounterValue><CounterArt $center><Remote /></CounterArt></Counter>
            <Counter><CounterValue>0</CounterValue><CounterArt><KeyShape color="#d9362c" blade="#b9969a" /><BlackCar /></CounterArt></Counter>
            <Counter><CounterValue>0</CounterValue><CounterArt><Badge /><BlackCar /></CounterArt></Counter>
            <Counter><CounterValue>0</CounterValue><CounterArt><LiftedCar /></CounterArt></Counter>
          </Counters>
        </Toolbar>
        <UserBox>
          <div>ADEM OLGUNER</div>
          <div>Yetkili</div>
          <UserIcons>
            <IconButton aria-label="Çıkış"><Power /></IconButton>
            <IconButton aria-label="Şifre"><LockPen /></IconButton>
            <IconButton aria-label="Görevler"><TaskShield w={19} /></IconButton>
          </UserIcons>
        </UserBox>
      </Header>
      <Body>
        <Left>
          <Desktop>
            <TechWindow />
            <InspectionWindow />
          </Desktop>
          <BottomBar>
            <BottomInner>
              <Info>
                <InfoLabel>Plaka / KM</InfoLabel>
                <InfoValue><RedLink href="#plaka">34TP8608</RedLink><RedLink href="#km">17696,00</RedLink></InfoValue>
                <InfoLabel>Marka :</InfoLabel><InfoValue>FORD</InfoValue>
                <InfoLabel>Model :</InfoLabel><InfoValue>TRANSIT 430 ED</InfoValue>
                <InfoLabel>İşletme :</InfoLabel><InfoValue>GAZİOSMANPAŞA</InfoValue>
              </Info>
              <Actions>
                {actions.map(([a, b, icon], i) => (
                  <ActionButton key={i}>{icon}<span>{a}<br />{b}</span></ActionButton>
                ))}
              </Actions>
            </BottomInner>
          </BottomBar>
        </Left>
        <IdentityCard />
        <Arrows width="260" height="480" viewBox="0 0 260 480" aria-hidden="true">
          <g stroke="#5b9bd5" strokeWidth="2" fill="#5b9bd5">
            <path d="M255 419 9 181M255 472 10 387" fill="none" />
            <path d="m5 177 8 3-5 5zM5 385l8-1-2 6z" />
          </g>
        </Arrows>
      </Body>
      <Footer>
        <FootCell $w={28} $pad="4px 0 0 0"><BlackCar /></FootCell>
        <FootInput />
        <FootCell $w={198} $pad="0 0 0 12px"><People /></FootCell>
      </Footer>
    </Page>
  );
}
